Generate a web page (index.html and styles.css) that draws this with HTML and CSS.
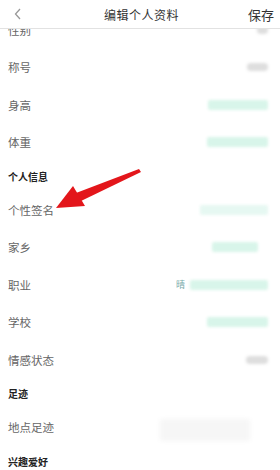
FILE: index.html
```html
<!doctype html>
<html lang="zh-CN">

<head>
    <meta charset="utf-8" />
    <title>编辑个人资料</title>

    <link rel="stylesheet" href="styles.css">
</head>

<body>
    <header class="topbar">
        <svg class="back" width="10" height="12" viewBox="0 0 10 12">
            <path d="M7 1 L2.5 6 L7 11" fill="none" stroke="#999" stroke-width="1.3" />
        </svg>
        <div class="title">编辑个人资料</div>
        <div class="save">保存</div>
    </header>

    <main class="list">
        <div class="row">
            <span class="label">性别</span>
            <span class="blob grey" style="width: 11px"></span>
        </div>
        <div class="row">
            <span class="label">称号</span>
            <span class="blob grey" style="width: 21px"></span>
        </div>
        <div class="row">
            <span class="label">身高</span>
            <span class="blob" style="width: 60px"></span>
        </div>
        <div class="row">
            <span class="label">体重</span>
            <span class="blob" style="width: 61px"></span>
        </div>

        <div class="section">个人信息</div>
        <div class="row">
            <span class="label">个性签名</span>
            <span class="blob light" style="width: 68px"></span>
        </div>
        <div class="row">
            <span class="label">家乡</span>
            <span class="blob" style="width: 46px; margin-right: 10px"></span>
        </div>
        <div class="row">
            <span class="label">职业</span>
            <span class="value"><span class="word">晴</span><span class="blob" style="width: 78px"></span></span>
        </div>
        <div class="row">
            <span class="label">学校</span>
            <span class="blob" style="width: 61px"></span>
        </div>
        <div class="row">
            <span class="label">情感状态</span>
            <span class="blob grey" style="width: 22px"></span>
        </div>

        <div class="section">足迹</div>
        <div class="row">
            <span class="label">地点足迹</span>
            <span class="blob mosaic" style="width: 90px; margin-right: 18px"></span>
        </div>

        <div class="section">兴趣爱好</div>
    </main>

    <!-- annotation arrow laid over the list -->
    <svg class="arrow" width="280" height="470" viewBox="0 0 280 470">
        <polygon points="139,169 141,172 81,201 76,193" fill="#e3161b" />
        <polygon points="56,208 73,186 85,206" fill="#e3161b" />
    </svg>
</body>

</html>
```

FILE: styles.css
```css
body {
    margin: 0;
    background: #fff;
    font-family: "Noto Sans CJK SC", "Noto Sans", sans-serif;
    overflow: hidden;
}

.topbar {
    position: fixed;
    top: 0;
    left: 0;
    right: 0;
    height: 28px;
    background: #fff;
    border-bottom: 1px solid #e2e2e2;
    display: flex;
    align-items: center;
    justify-content: space-between;
    padding: 0 6px 0 13px;
    z-index: 2;
}

.back {
    display: block;
}

.title {
    font-size: 12px;
    letter-spacing: 0.5px;
    color: #333;
    margin-left: 12px;
}

.save {
    font-size: 13px;
    color: #333;
}

.list {
    padding-top: 11px;
}

.row {
    height: 37.5px;
    display: flex;
    align-items: center;
    justify-content: space-between;
    padding: 0 12px 0 8px;
}

.label {
    font-size: 11.5px;
    color: #666;
}

.section {
    height: 30px;
    display: flex;
    align-items: center;
    padding-left: 8px;
    font-size: 10px;
    font-weight: bold;
    color: #222;
}

.value {
    display: flex;
    align-items: center;
}

.word {
    font-size: 9px;
    color: #7aa;
    margin-right: 5px;
}

.blob {
    display: block;
    height: 10px;
    background: #d8f5ea;
    border-radius: 2px;
    filter: blur(1.5px);
}

.blob.light {
    background: #e6f8f2;
}

.blob.grey {
    height: 8px;
    background: #dedede;
    border-radius: 4px;
}

.blob.mosaic {
    height: 22px;
    margin-top: 6px;
    background: #f6f6f6;
    filter: blur(2px);
}

.arrow {
    position: fixed;
    top: 0;
    left: 0;
    z-index: 3;
    pointer-events: none;
}
```
